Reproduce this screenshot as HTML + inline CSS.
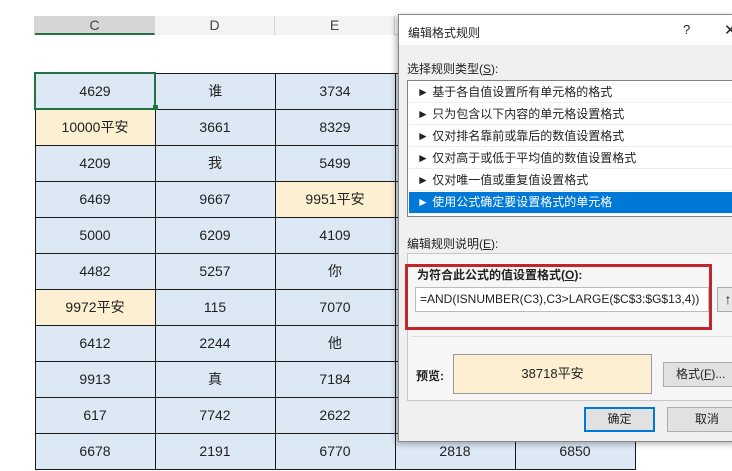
<!DOCTYPE html>
<html><head><meta charset="utf-8"><style>
*{margin:0;padding:0;box-sizing:border-box}
body{width:732px;height:471px;overflow:hidden;background:#fff;position:relative;font-family:"Liberation Sans","Noto Sans CJK SC",sans-serif;color:#222}
.a{position:absolute}
table{position:absolute;left:35px;top:72px;border-collapse:collapse}
td{width:120px;height:36px;border:1px solid #1a1a1a;background:#dde8f5;text-align:center;font-size:14px;padding:0}
td.y{background:#fdf0d2}
.hd{top:16px;height:19px;border-right:1px solid #d4d4d4;background:#f3f3f3;text-align:center;font-size:14px;color:#444;line-height:19px}
.dlg{left:398px;top:14px;width:340px;height:428px;background:#f0f0f0;border:1px solid #888;box-shadow:-2px 2px 6px rgba(0,0,0,.3)}
.t{font-size:12px;color:#222;white-space:nowrap}
.li{position:absolute;left:1px;width:330px;height:21px;line-height:21px;font-size:12px;padding-left:8px;border-bottom:1px solid #eee}
.btn{position:absolute;height:25px;background:#e1e1e1;border:1px solid #adadad;font-size:12px;text-align:center;line-height:23px}
</style></head><body>
<div class="a" style="left:0;top:0;width:732px;height:14px;background:#fff"></div>
<div class="a" style="left:0;top:34px;width:400px;height:1px;background:#d4d4d4"></div>
<div class="a hd" style="left:35px;width:120px;background:#d6d6d6;border-bottom:2px solid #217346">C</div>
<div class="a hd" style="left:155px;width:120px">D</div>
<div class="a hd" style="left:275px;width:120px">E</div>
<div class="a hd" style="left:0;width:35px;background:#fff"></div>
<table style="left:34px">
<tr><td style="border:2px solid #217346">4629</td><td>谁</td><td>3734</td><td></td><td></td></tr>
<tr><td class="y">10000平安</td><td>3661</td><td>8329</td><td></td><td></td></tr>
<tr><td>4209</td><td>我</td><td>5499</td><td></td><td></td></tr>
<tr><td>6469</td><td>9667</td><td class="y">9951平安</td><td></td><td></td></tr>
<tr><td>5000</td><td>6209</td><td>4109</td><td></td><td></td></tr>
<tr><td>4482</td><td>5257</td><td>你</td><td></td><td></td></tr>
<tr><td class="y">9972平安</td><td>115</td><td>7070</td><td></td><td></td></tr>
<tr><td>6412</td><td>2244</td><td>他</td><td></td><td></td></tr>
<tr><td>9913</td><td>真</td><td>7184</td><td></td><td></td></tr>
<tr><td>617</td><td>7742</td><td>2622</td><td></td><td></td></tr>
<tr><td>6678</td><td>2191</td><td>6770</td><td>2818</td><td>6850</td></tr>
</table>
<div class="a" style="left:153px;top:105px;width:5px;height:5px;background:#217346"></div>
<div class="a dlg">
 <div class="a" style="left:0;top:0;width:340px;height:30px;background:#fff"></div>
 <div class="a t" style="left:9px;top:9px">编辑格式规则</div>
 <div class="a t" style="left:284px;top:7px;font-size:13px">?</div>
 <div class="a t" style="left:325px;top:6px;font-size:15px">✕</div>
 <div class="a t" style="left:8px;top:45px">选择规则类型(<u>S</u>):</div>
 <div class="a" style="left:8px;top:65px;width:335px;height:137px;background:#fff;border:1px solid #828282">
  <div class="li" style="top:1px">► 基于各自值设置所有单元格的格式</div>
  <div class="li" style="top:23px">► 只为包含以下内容的单元格设置格式</div>
  <div class="li" style="top:45px">► 仅对排名靠前或靠后的数值设置格式</div>
  <div class="li" style="top:67px">► 仅对高于或低于平均值的数值设置格式</div>
  <div class="li" style="top:89px">► 仅对唯一值或重复值设置格式</div>
  <div class="li" style="top:111px;background:#0078d7;color:#fff;height:22px">► 使用公式确定要设置格式的单元格</div>
 </div>
 <div class="a t" style="left:8px;top:220px">编辑规则说明(<u>E</u>):</div>
 <div class="a" style="left:8px;top:238px;width:335px;height:148px;background:#f6f6f6;border:1px solid #c8c8c8"></div>
 <div class="a" style="left:6px;top:249px;width:307px;height:66px;border:3px solid #c0262b"></div>
 <div class="a t" style="left:18px;top:251px;font-weight:bold">为符合此公式的值设置格式(<u>O</u>):</div>
 <div class="a" style="left:16px;top:272px;width:294px;height:25px;background:#fff;border:1px solid #bbb;font-size:12px;line-height:23px;padding-left:4px;white-space:nowrap;overflow:hidden">=AND(ISNUMBER(C3),C3&gt;LARGE($C$3:$G$13,4))</div>
 <div class="a" style="left:318px;top:272px;width:22px;height:25px;background:#e8e8e8;border:1px solid #aaa;font-size:14px;text-align:center;line-height:22px;font-weight:bold">↑</div>
 <div class="a" style="left:12px;top:321px;width:330px;height:1px;background:#ddd"></div>
 <div class="a t" style="left:17px;top:352px;font-weight:bold">预览:</div>
 <div class="a" style="left:54px;top:339px;width:199px;height:40px;background:#fdf0d2;border:1px solid #999;font-size:13px;text-align:center;line-height:38px">38718平安</div>
 <div class="btn" style="left:264px;top:347px;width:80px;text-align:left;padding-left:12px">格式(<u>F</u>)...</div>
 <div class="btn" style="left:185px;top:392px;width:71px;border:2px solid #0078d7;line-height:21px">确定</div>
 <div class="btn" style="left:268px;top:392px;width:80px">取消</div>
</div>
</body></html>
